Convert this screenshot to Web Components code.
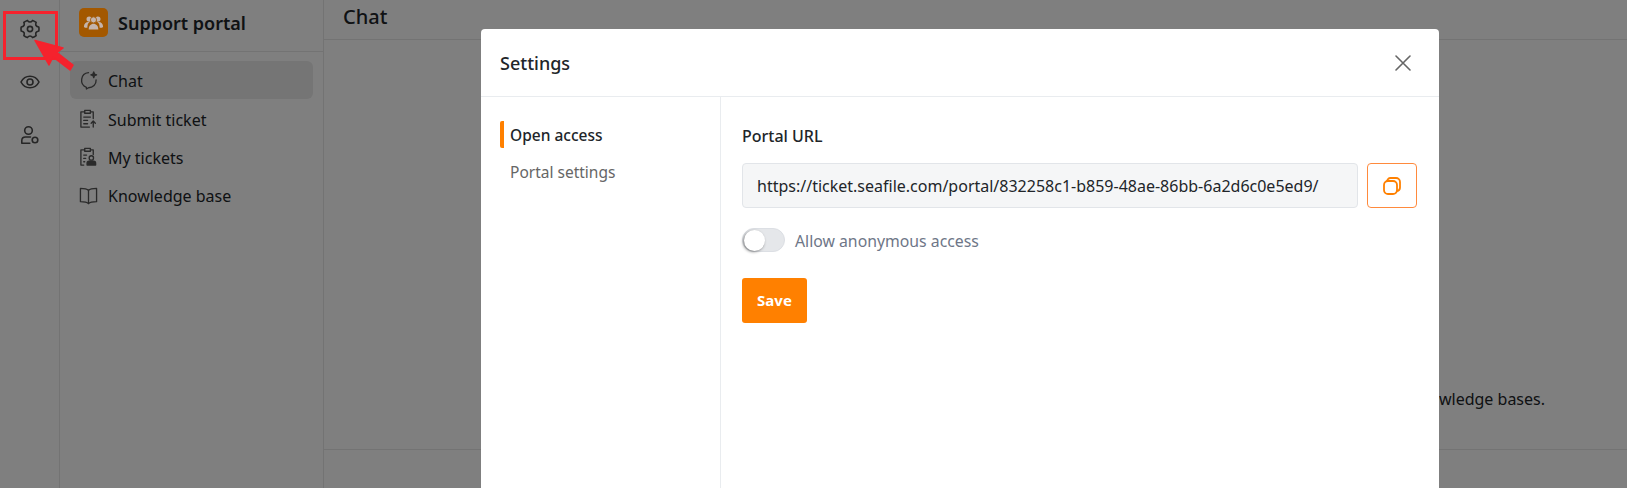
<!DOCTYPE html>
<html>
<head>
<meta charset="utf-8">
<title>Support portal</title>
<style>
  html, body { margin: 0; height: 488px; overflow: hidden; background: #fff; }
  body { font-family: "Noto Sans", "Liberation Sans", sans-serif; color: #212529; }
  #page { display: flex; height: 488px; }
</style>
</head>
<body>

<div id="page">
  <portal-rail>
    <rail-button>
      <svg viewBox="0 0 20 20"><path d="M18.770 7.980A9.300 9.300 0 0 1 18.770 12.020Q14.680 12.700 16.140 16.580A9.300 9.300 0 0 1 12.630 18.610Q10 15.400 7.370 18.610A9.300 9.300 0 0 1 3.860 16.580Q5.320 12.700 1.230 12.020A9.300 9.300 0 0 1 1.230 7.980Q5.320 7.300 3.860 3.420A9.300 9.300 0 0 1 7.370 1.390Q10 4.600 12.630 1.390A9.300 9.300 0 0 1 16.140 3.420Q14.680 7.300 18.770 7.980z"/><circle cx="10" cy="10" r="2.600"/></svg>
    </rail-button>
    <rail-button>
      <svg viewBox="0 0 20 20"><path d="M1 10C3 6.100 6.200 4.200 10 4.200s7 1.900 9 5.800c-2 3.900-5.200 5.800-9 5.800S3 13.900 1 10z"/><circle cx="10" cy="10" r="3"/></svg>
    </rail-button>
    <rail-button>
      <svg viewBox="0 0 20 20"><circle cx="8.500" cy="5.500" r="3.800"/><path d="M10.500 12H5.500C3.300 12 1.800 13.500 1.800 15.500v2.700h8"/><circle cx="15" cy="15" r="2.800"/></svg>
    </rail-button>
  </portal-rail>

  <portal-sidebar name="Support portal">
    <nav-item active label="Chat">
      <svg slot="icon" viewBox="0 0 20 20"><path d="M18 9.500a8 7.600 0 0 1-8 8.100l-2.200 1.300v-1.700A8 8 0 0 1 10 1.800"/><path d="M15.500 1l.8 2.200 2.200.8-2.200.8-.8 2.200-.8-2.200-2.200-.8 2.200-.8z" fill="#555"/></svg>
    </nav-item>
    <nav-item label="Submit ticket">
      <svg slot="icon" viewBox="0 0 20 20"><path d="M6 3H2v16h9"/><path d="M12 3h3v7"/><rect x="6" y="1.500" width="6" height="3"/><path d="M5 8.500h7M5 12h4M5 15.500h4"/><path d="M15 19v-6M12.800 15l2.200-2.300 2.200 2.300"/></svg>
    </nav-item>
    <nav-item label="My tickets">
      <svg slot="icon" viewBox="0 0 20 20"><path d="M6 3H2v16h3"/><path d="M12 3h3v5"/><rect x="6" y="1.500" width="6" height="3"/><path d="M5 8.500h3M5 12h2M5 15.500h1"/><circle cx="13" cy="11.500" r="2.300"/><path d="M8.500 19v-2a2 2 0 0 1 2-2h5a2 2 0 0 1 2 2v2z" fill="#555"/></svg>
    </nav-item>
    <nav-item label="Knowledge base">
      <svg slot="icon" viewBox="0 0 20 20"><path d="M10 4.500C8.500 3 6 2.500 1.500 2.500v14c4.500 0 7 .5 8.500 2 1.500-1.500 4-2 8.500-2v-14c-4.500 0-7 .5-8.500 2z"/><path d="M10 4.500v14"/></svg>
    </nav-item>
  </portal-sidebar>

  <portal-main heading="Chat">
    <span>Ask questions about your knowledge bases.</span>
  </portal-main>
</div>

<settings-dialog heading="Settings"></settings-dialog>
<guide-marker></guide-marker>

<template id="portal-rail-tpl">
  <style>
    :host { display: flex; flex-direction: column; align-items: center; box-sizing: border-box; width: 60px; padding-top: 4px; gap: 3px; border-right: 1px solid #e6e6e6; flex: none; }
  </style>
  <slot></slot>
</template>

<template id="rail-button-tpl">
  <style>
    :host { display: flex; align-items: center; justify-content: center; width: 50px; height: 50px; }
    ::slotted(svg) { width: 20px; height: 20px; fill: none; stroke: #4d4d4d; stroke-width: 1.600; stroke-linejoin: round; stroke-linecap: round; }
  </style>
  <slot></slot>
</template>

<template id="portal-sidebar-tpl">
  <style>
    :host { display: block; box-sizing: border-box; width: 264px; flex: none; border-right: 1px solid #e6e6e6; }
    header { display: flex; align-items: center; gap: 9px; box-sizing: border-box; height: 52px; padding: 0 0 6px 19px; border-bottom: 1px solid #e6e6e6; }
    /* the logo reads brighter than the dimmed page, so it sits over the backdrop */
    .logo { position: relative; z-index: 2; display: flex; align-items: center; justify-content: center; width: 29px; height: 29px; border-radius: 5px; background: #a35800; }
    .logo svg { width: 21px; height: 21px; fill: #c4b4ac; }
    h1 { margin: 0; font-size: 18px; line-height: 24px; font-weight: 600; color: #212529; padding-left: 1px; }
    nav { display: flex; flex-direction: column; padding: 9px 10px; }
  </style>
  <header>
    <div class="logo">
      <svg viewBox="0 0 24 24"><circle cx="7" cy="8" r="3"/><circle cx="17" cy="8" r="3"/><circle cx="12" cy="9" r="3.500" stroke="#a35800"/><path d="M1 17c0-3.500 2.500-5.500 5-5.500h1.500C5.500 13 5 15 5 18H2.500z"/><path d="M23 17c0-3.500-2.500-5.500-5-5.500h-1.500c2 1.500 2.500 3.500 2.500 6.500h2.500z"/><path d="M6.500 20c0-4 2.500-6.500 5.500-6.500s5.500 2.500 5.500 6.500z"/></svg>
    </div>
    <h1 id="name"></h1>
  </header>
  <nav><slot></slot></nav>
</template>

<template id="nav-item-tpl">
  <style>
    :host { display: flex; align-items: center; gap: 10px; box-sizing: border-box; height: 38.4px; padding-left: 9px; border-radius: 6px; font-size: 16px; color: #212529; }
    :host([active]) { background: #ebebeb; }
    ::slotted(svg) { width: 19px; height: 19px; fill: none; stroke: #555; stroke-width: 1.400; stroke-linejoin: round; stroke-linecap: round; }
    span { padding-top: 2px; }
  </style>
  <slot name="icon"></slot>
  <span id="label"></span>
</template>

<template id="portal-main-tpl">
  <style>
    :host { display: flex; flex-direction: column; flex: 1; min-width: 0; }
    header { box-sizing: border-box; height: 40px; padding: 0 0 6px 19px; border-bottom: 1px solid #e6e6e6; font-size: 20px; line-height: 33px; font-weight: 500; color: #212529; }
    .body { flex: 1; display: flex; justify-content: flex-end; box-sizing: border-box; padding: 346px 82px 0 0; font-size: 16px; line-height: 26px; }
    footer { height: 38px; border-top: 1px solid #e6e6e6; }
  </style>
  <header id="heading"></header>
  <div class="body"><slot></slot></div>
  <footer></footer>
</template>

<template id="settings-dialog-tpl">
  <style>
    :host { position: absolute; inset: 0; display: block; background: rgba(0, 0, 0, 0.5); }
    .dialog { position: absolute; left: 481px; top: 29px; width: 958px; height: 480px; display: flex; flex-direction: column; background: #fff; border-radius: 4px 4px 0 0; color: #212529; }
    header { display: flex; align-items: center; justify-content: space-between; box-sizing: border-box; height: 68px; flex: none; padding: 0 28px 0 19px; border-bottom: 1px solid #e9ecef; }
    h2 { margin: 0; font-size: 18px; line-height: 24px; font-weight: 500; }
    header svg { width: 16px; height: 16px; stroke: #666; stroke-width: 1.600; fill: none; stroke-linecap: round; }
    .columns { flex: 1; display: flex; }
    aside { box-sizing: border-box; width: 240px; flex: none; padding: 24px 0 0 19px; border-right: 1px solid #e9ecef; display: flex; flex-direction: column; gap: 10px; font-size: 15.500px; }
    .content { flex: 1; padding: 27px 22px 0 21px; font-size: 16px; }
  </style>
  <div class="dialog">
    <header>
      <h2 id="heading"></h2>
      <svg viewBox="0 0 16 16"><path d="M1 1l14 14M15 1L1 15"/></svg>
    </header>
    <div class="columns">
      <aside>
        <tab-item active>Open access</tab-item>
        <tab-item>Portal settings</tab-item>
      </aside>
      <div class="content">
        <url-field label="Portal URL" value="https://ticket.seafile.com/portal/832258c1-b859-48ae-86bb-6a2d6c0e5ed9/"></url-field>
        <toggle-row>Allow anonymous access</toggle-row>
        <save-button>Save</save-button>
      </div>
    </div>
  </div>
</template>

<template id="tab-item-tpl">
  <style>
    :host { display: block; box-sizing: border-box; height: 27px; padding-left: 6px; line-height: 28px; color: #666; border-left: 4px solid transparent; border-radius: 2px; }
    :host([active]) { color: #212529; font-weight: 500; border-left-color: #ff8000; }
  </style>
  <slot></slot>
</template>

<template id="url-field-tpl">
  <style>
    :host { display: block; }
    label { display: block; font-weight: 500; line-height: 24px; margin-bottom: 15px; color: #212529; }
    .row { display: flex; gap: 9px; }
    .value { flex: 1; box-sizing: border-box; height: 45px; padding: 0 14px; line-height: 45px; background: #f5f6f7; border: 1px solid #e2e5e9; border-radius: 4px; color: #212529; white-space: nowrap; overflow: hidden; }
    button { box-sizing: border-box; width: 50px; height: 45px; padding: 0; display: flex; align-items: center; justify-content: center; background: #fff; border: 1px solid #ff8a3d; border-radius: 4px; }
    svg { width: 18px; height: 18px; fill: none; stroke: #ff8000; stroke-width: 1.800; }
  </style>
  <label id="label"></label>
  <div class="row">
    <div class="value" id="value"></div>
    <button aria-label="Copy">
      <svg viewBox="0 0 18 18"><path d="M4 4.500A3.500 3.500 0 0 1 7.500 1H13a4 4 0 0 1 4 4v5.500A3.500 3.500 0 0 1 14 14"/><rect x="1" y="4" width="13" height="13" rx="4"/></svg>
    </button>
  </div>
</template>

<template id="toggle-row-tpl">
  <style>
    :host { display: flex; align-items: center; gap: 10px; margin-top: 20px; color: #6e7687; line-height: 24px; font-size: 15.800px; }
    .track { box-sizing: border-box; width: 43px; height: 24px; border-radius: 12px; background: #e5e7ea; border: 1px solid #dcdfe4; display: flex; align-items: center; }
    .knob { width: 21px; height: 21px; border-radius: 50%; background: #fff; box-shadow: -1px 1px 3px rgba(0, 0, 0, 0.45); margin-left: 1px; }
    span { line-height: 26px; height: 24px; }
  </style>
  <div class="track"><div class="knob"></div></div>
  <span><slot></slot></span>
</template>

<template id="save-button-tpl">
  <style>
    :host { display: flex; align-items: center; justify-content: center; box-sizing: border-box; width: 65px; height: 45px; margin-top: 26px; padding-bottom: 2px; background: #ff8000; color: #fff; border-radius: 3px; font-size: 15px; font-weight: 700; }
  </style>
  <slot></slot>
</template>

<template id="guide-marker-tpl">
  <style>
    :host { position: absolute; left: 0; top: 0; display: block; width: 80px; height: 80px; z-index: 3; }
    svg { display: block; width: 80px; height: 80px; }
  </style>
  <svg viewBox="0 0 80 80">
    <rect x="4.500" y="12.500" width="52" height="46" fill="none" stroke="#f5222d" stroke-width="3"/>
    <path d="M35 40.500L63 48 57 52.500 73 65 70 70 53 57 49 65z" fill="#f5222d" stroke="#f5222d" stroke-width="1.500" stroke-linejoin="round"/>
  </svg>
</template>

<script>
  (function() {
    // plain components: clone the template, copy attributes into the named nodes
    function define(tag, fill) {
      const template = document.getElementById(tag + '-tpl').content;
      customElements.define(tag, class extends HTMLElement {
        constructor() {
          super();
          this.attachShadow({ mode: 'open' }).appendChild(template.cloneNode(true));
        }
        connectedCallback() {
          if (fill) fill(this, this.shadowRoot);
        }
      });
    }

    define('portal-rail');
    define('rail-button');
    define('portal-sidebar', (el, root) => { root.getElementById('name').textContent = el.getAttribute('name'); });
    define('nav-item', (el, root) => { root.getElementById('label').textContent = el.getAttribute('label'); });
    define('portal-main', (el, root) => { root.getElementById('heading').textContent = el.getAttribute('heading'); });
    define('settings-dialog', (el, root) => { root.getElementById('heading').textContent = el.getAttribute('heading'); });
    define('tab-item');
    define('url-field', (el, root) => {
      root.getElementById('label').textContent = el.getAttribute('label');
      root.getElementById('value').textContent = el.getAttribute('value');
    });
    define('toggle-row');
    define('save-button');
    define('guide-marker');
  })();
</script>
</body>
</html>
